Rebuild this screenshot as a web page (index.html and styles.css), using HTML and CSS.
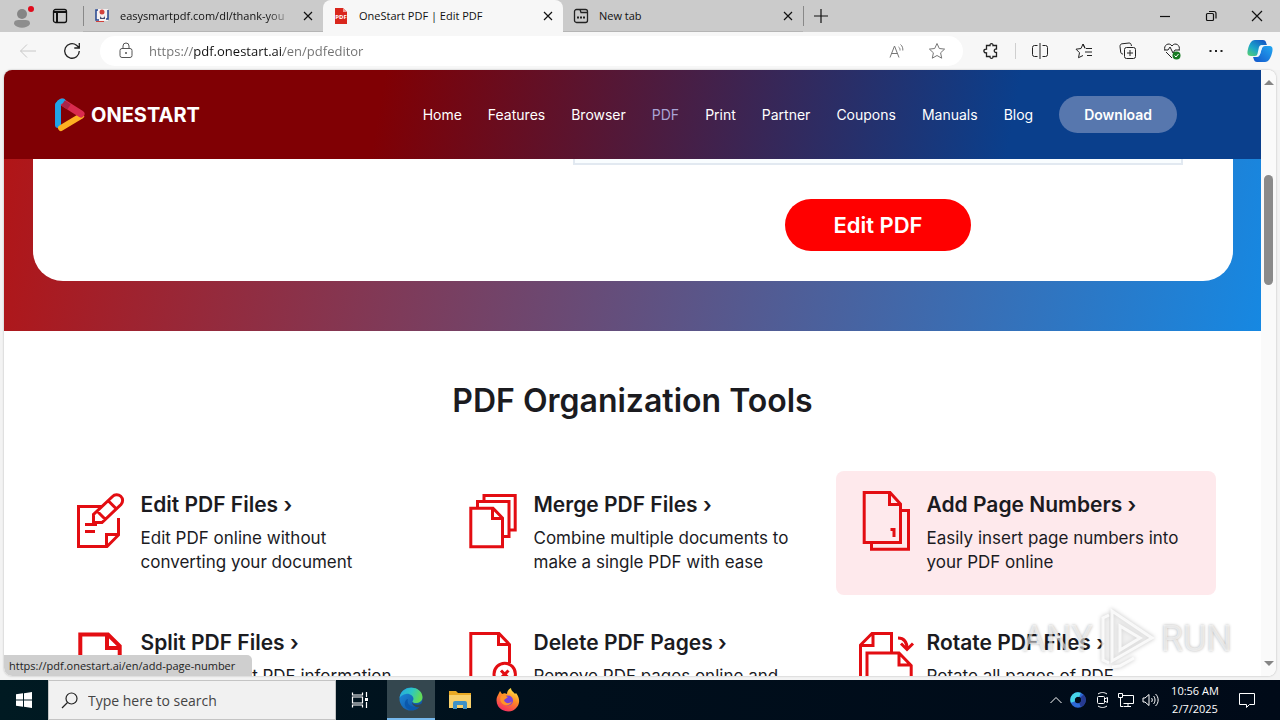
FILE: index.html
```
<!DOCTYPE html>
<html lang="en">
<head>
    <meta charset="UTF-8">
    <meta name="viewport" content="width=device-width, initial-scale=1.0">
    <title>OneStart PDF | Edit PDF</title>
    <link rel="stylesheet" href="styles.css">
</head>
<body>

    <!-- Browser tabs -->
    <div class="tabbar">
        <button class="profile" aria-label="Profile">
            <svg width="28" height="28" viewBox="0 0 28 28"><circle cx="14" cy="12" r="5" fill="#858585"/><path d="M6 22c0-4 2-4 8-4s8 0 8 4c-3 5-13 5-16 0z" fill="#8e8e8e"/><circle cx="23" cy="7" r="3" fill="#e00b1c"/></svg>
        </button>
        <button class="tab-actions" aria-label="Tab actions">
            <svg width="16" height="16" viewBox="0 0 16 16" fill="none" stroke="#111" stroke-width="1.300"><rect x="1.500" y="1.500" width="13" height="13" rx="2"/><path d="M1.500 4h13M5 4v10" stroke-width="2"/></svg>
        </button>
        <div class="tab tab-first">
            <svg width="16" height="16" viewBox="0 0 16 16"><rect x="2" y="1" width="12" height="12" fill="#f5f0f0"/><path d="M4 2H2v10h3M14 2v9h-2" fill="none" stroke="#24448f" stroke-width="1.500"/><circle cx="8" cy="4" r="2.500" fill="#d2413b"/><path d="M6 7c0 4 5 4 5 0v4H6z" fill="#444a70"/><path d="M2 13.500h8" stroke="#d2413b"/></svg>
            <span class="tab-title fade">easysmartpdf.com/dl/thank-you</span>
            <button class="close" aria-label="Close tab"><svg width="10" height="10" viewBox="0 0 10 10"><path d="M1 1l8 8M9 1L1 9"/></svg></button>
        </div>
        <div class="tab active">
            <svg width="16" height="16" viewBox="0 0 16 16"><path d="M2 0h8l4 4v12H2z" fill="#d9261c"/><path d="M10 0l4 4h-4z" fill="#f39a94"/><text x="8" y="11" class="pdf-mark">PDF</text></svg>
            <span class="tab-title">OneStart PDF | Edit PDF</span>
            <button class="close" aria-label="Close tab"><svg width="10" height="10" viewBox="0 0 10 10"><path d="M1 1l8 8M9 1L1 9"/></svg></button>
        </div>
        <div class="tab">
            <svg width="16" height="16" viewBox="0 0 16 16" fill="none" stroke="#222" stroke-width="1.300"><rect x="1.500" y="1.500" width="13" height="13" rx="2"/><path d="M7 1.500l1 3h6.500"/><path d="M4 9.500h2M7 9.500h2M10 9.500h2" stroke-width="1.800"/></svg>
            <span class="tab-title">New tab</span>
            <button class="close" aria-label="Close tab"><svg width="10" height="10" viewBox="0 0 10 10"><path d="M1 1l8 8M9 1L1 9"/></svg></button>
        </div>
        <button class="new-tab" aria-label="New tab"><svg width="14" height="14" viewBox="0 0 14 14"><path d="M7 0v14M0 7h14"/></svg></button>
        <div class="window-buttons">
            <button aria-label="Minimize"><svg width="12" height="12" viewBox="0 0 12 12"><path d="M1 6.500h10"/></svg></button>
            <button aria-label="Restore"><svg width="12" height="12" viewBox="0 0 12 12"><rect x="1.500" y="3.500" width="7" height="7" rx="1"/><path d="M4 1.500h5a2 2 0 0 1 2 2v5"/></svg></button>
            <button aria-label="Close"><svg width="12" height="12" viewBox="0 0 12 12"><path d="M1 1l10 10M11 1L1 11"/></svg></button>
        </div>
    </div>

    <!-- Address bar and browser buttons -->
    <div class="toolbar">
        <button class="nav-button" aria-label="Back" disabled><svg width="18" height="18" viewBox="0 0 18 18"><path d="M17 9H1.500M8 2.500L1.500 9 8 15.500" stroke="#c8c8c8"/></svg></button>
        <button class="nav-button" aria-label="Reload"><svg width="18" height="18" viewBox="0 0 18 18"><path d="M16.300 9A7.300 7.300 0 1 1 13.500 3.200L16 5.500M16.300 1v5h-5" stroke-width="1.300"/></svg></button>
        <div class="address">
            <svg width="18" height="18" viewBox="0 0 18 18"><rect x="3" y="6.500" width="12" height="9" rx="2" stroke="#555"/><path d="M6 6.500V4a3 3 0 0 1 6 0v2.500" stroke="#555"/><circle cx="9" cy="11" r="1" fill="#555" stroke="none"/></svg>
            <input class="url" type="text" aria-label="Address" value="https://pdf.onestart.ai/en/pdfeditor">
            <button aria-label="Read aloud"><svg width="18" height="18" viewBox="0 0 18 18"><path d="M2 15.500L6.500 4l4.500 11.500M3.500 11.500h6M10.500 5c1.500 1 1.500 2 1.500 3.500M12.500 2.500c2 1.500 2.500 4 2.300 6" stroke="#777"/></svg></button>
            <button aria-label="Add to favorites"><svg width="18" height="18" viewBox="0 0 18 18"><path d="M9 1.500l2.300 5 5.300.600-4 3.700 1.100 5.400L9 13.500l-4.700 2.700 1.100-5.400-4-3.700 5.300-.600z" stroke="#777"/></svg></button>
        </div>
        <div class="tools">
            <button aria-label="Extensions"><svg width="18" height="18" viewBox="0 0 18 18"><path d="M5 3.500h3c-.500-2.500 3.500-2.500 3 0h3.500v3.500c-3-.500-3 4 0 3.500v4H11c.500 2.500-3.500 2.500-3 0H4.500v-3.700c-3.500.500-3.500-4.100 0-3.600V3.500z" stroke-width="1.300"/></svg></button>
            <span class="separator"></span>
            <button aria-label="Split screen"><svg width="18" height="18" viewBox="0 0 18 18"><path d="M6.500 3.500h-3a2 2 0 0 0-2 2v7a2 2 0 0 0 2 2h3M11.500 3.500h3a2 2 0 0 1 2 2v7a2 2 0 0 1-2 2h-3M9 1v16"/></svg></button>
            <button aria-label="Favorites"><svg width="18" height="18" viewBox="0 0 18 18"><path d="M10 6L8 2 6 6.500l-5 .700 3.500 3.500-1 5L8 13.500M11 6.500h6M10 10h7M12 13.500h5M8 2l2 4.500"/></svg></button>
            <button aria-label="Collections"><svg width="18" height="18" viewBox="0 0 18 18"><path d="M4 12c-1.500 0-2-.500-2.300-2L1 4.500C1 3 1.500 2 3 1.800l7-.800c1.500 0 2 .500 2.500 3"/><rect x="5.500" y="5.500" width="11" height="11" rx="2"/><path d="M11 8v6M8 11h6"/></svg></button>
            <button aria-label="Browser essentials"><svg width="18" height="18" viewBox="0 0 18 18"><path d="M2 8C0 3.500 6-.500 9 4c3-4.500 9-.500 7 4M1 8h4l2-3 3 6 2-3h5M3 10l6 6"/><circle cx="13.500" cy="13.500" r="4" fill="#177b22" stroke="none"/><path d="M11.500 13.500l1.500 1.500 2.500-3" stroke="#fff"/></svg></button>
            <button aria-label="Settings and more"><svg width="18" height="18" viewBox="0 0 18 18"><path d="M2.500 9h2M8 9h2M13.500 9h2" stroke-width="2"/></svg></button>
            <button aria-label="Copilot">
                <svg class="copilot" width="26" height="26" viewBox="0 0 26 26">
                    <defs>
                        <linearGradient id="copA" x1="0" y1="1" x2=".800" y2="0"><stop offset="0" stop-color="#5bd36b"/><stop offset=".450" stop-color="#1ca6c9"/><stop offset="1" stop-color="#1458c5"/></linearGradient>
                        <linearGradient id="copB" x1="0" y1="1" x2="1" y2="0"><stop offset="0" stop-color="#1255cb"/><stop offset="1" stop-color="#24a9f2"/></linearGradient>
                    </defs>
                    <path d="M8 2h8c3 0 3 3 4 5h-4c-2 0-3 2-4 6s-2 5-5 5H4c-4 0-4-3-3-7s3-9 7-9z" fill="url(#copA)"/>
                    <path d="M18 24h-8c-3 0-3-3-4-5h4c2 0 3-2 4-6s2-5 5-5h3c4 0 4 3 3 7s-3 9-7 9z" fill="url(#copB)"/>
                    <path d="M12 9c1-2 2-2 4-2l-2 6c-1 3-1 5-4 5z" fill="#eaf7ff"/>
                </svg>
            </button>
        </div>
    </div>

    <div class="viewport">
        <div class="page">
            <header class="site-header">
                <a class="logo" href="#">
                    <svg width="31" height="34" viewBox="0 0 31 34" fill="none" stroke-width="6" stroke-linecap="round">
                        <path d="M4 27V7" stroke="#1e9bea"/>
                        <path d="M7 30L27 18" stroke="#fdb022"/>
                        <path d="M8 4l19 12" stroke="#d92b4f" stroke-width="7"/>
                        <path d="M4 25V8c0-3 2-5 5-5" stroke="#21a5e6" stroke-width="5"/>
                        <path d="M9 5l6 4" stroke="#a92548" stroke-linecap="butt"/>
                    </svg>
                    <span>ONESTART</span>
                </a>
                <nav class="menu">
                    <a href="#">Home</a>
                    <a href="#">Features</a>
                    <a href="#">Browser</a>
                    <a href="#" class="current">PDF</a>
                    <a href="#">Print</a>
                    <a href="#">Partner</a>
                    <a href="#">Coupons</a>
                    <a href="#">Manuals</a>
                    <a href="#">Blog</a>
                    <a href="#" class="download">Download</a>
                </nav>
            </header>

            <section class="hero">
                <div class="hero-card">
                    <div class="upload">
                        <div class="drop-area"></div>
                        <button class="edit-button">Edit PDF</button>
                    </div>
                </div>
            </section>

            <main class="tools-section">
                <h1>PDF Organization Tools</h1>
                <div class="tool-grid">
                    <a class="tool" href="#">
                        <svg class="tool-icon" viewBox="0 0 50 60">
                            <path d="M27 15.500H3.500V55.500H32L43.500 44V27M31.500 55.500V43.500H43.500M10 33.500h12M10 40.500h10"/>
                            <path d="M18.500 31.500v-8L37.500 5.500a5.800 5.800 0 0 1 8.500 8L27 31.500zM22 20l8.500 8.500M33 9.500l9 9"/>
                        </svg>
                        <div>
                            <h2>Edit PDF Files ›</h2>
                            <p>Edit PDF online without converting your document</p>
                        </div>
                    </a>
                    <a class="tool" href="#">
                        <svg class="tool-icon" viewBox="0 0 50 60">
                            <path d="M2.800 17.200H25L34.500 27V55.800H2.800zM24.500 17V27.500H34.500M9.500 17V10.500H41V45.500H35M16 10V4.500H47.200V39H41"/>
                        </svg>
                        <div>
                            <h2>Merge PDF Files ›</h2>
                            <p>Combine multiple documents to make a single PDF with ease</p>
                        </div>
                    </a>
                    <a class="tool hovered" href="#">
                        <svg class="tool-icon" viewBox="0 0 50 60">
                            <path d="M3.200 1.500H29L39.500 13V51.500H3.200zM28.500 1.500V13.500H39.500M10.500 52V58.200H47.500V19.500H40M29.500 38.500h3.500v7.500"/>
                        </svg>
                        <div>
                            <h2>Add Page Numbers ›</h2>
                            <p>Easily insert page numbers into your PDF online</p>
                        </div>
                    </a>
                    <a class="tool" href="#">
                        <svg class="tool-icon heavy" viewBox="0 0 50 60">
                            <path d="M5.300 60V5.500H33L44.700 17V60M32 6V19H45"/>
                        </svg>
                        <div>
                            <h2>Split PDF Files ›</h2>
                            <p>Split or extract PDF information into separate files</p>
                        </div>
                    </a>
                    <a class="tool" href="#">
                        <svg class="tool-icon" viewBox="0 0 50 60">
                            <path d="M2.800 60V4.500H31L41.500 15.500V34M30.500 4.500V15.500H41.500M33 41.500l7.500 7.500M40.500 41.500L33 49"/>
                            <circle cx="36.700" cy="45" r="10.700"/>
                        </svg>
                        <div>
                            <h2>Delete PDF Pages ›</h2>
                            <p>Remove PDF pages online and download instantly</p>
                        </div>
                    </a>
                    <a class="tool" href="#">
                        <svg class="tool-icon" viewBox="0 0 50 60">
                            <path d="M-.500 60V16L11 4.500H30.500V23M12 4.500V16.500H-.500M6 60V24H38L50.200 36.500V60M38 24V36H50.200M37 9c6 0 9 4 9 11M40 14.500l6 6 6-6"/>
                        </svg>
                        <div>
                            <h2>Rotate PDF Files ›</h2>
                            <p>Rotate all pages of PDF documents online</p>
                        </div>
                    </a>
                </div>
            </main>
        </div>
        <div class="scrollbar">
            <span class="arrow-up"></span>
            <span class="thumb"></span>
            <span class="arrow-down"></span>
        </div>
        <div class="link-status">https://pdf.onestart.ai/en/add-page-number</div>
    </div>

    <div class="watermark">
        <span>ANY</span>
        <svg width="56" height="62" viewBox="0 0 56 62"><path d="M10 7L4 10v42l6 3M13 3v50l40-23zM21 18v24l20-12z M13 59l8-1 14-8"/></svg>
        <span>RUN</span>
    </div>

    <!-- Windows taskbar -->
    <footer class="taskbar">
        <button class="start" aria-label="Start"><svg width="16" height="16" viewBox="0 0 16 16"><path d="M0 2.300L7 1.300V7.500H0zM8 1.200L16 0V7.500H8zM0 8.500H7V14.700L0 13.700zM8 8.500H16V16L8 14.800z" fill="#fff"/></svg></button>
        <label class="search">
            <svg width="17" height="17" viewBox="0 0 17 17" fill="none" stroke="#222" stroke-width="1.200"><circle cx="10.500" cy="6.500" r="5.500"/><path d="M6.500 10.500L1 16"/></svg>
            <input type="text" placeholder="Type here to search" aria-label="Search">
        </label>
        <button class="task" aria-label="Task view"><svg width="18" height="18" viewBox="0 0 18 18" fill="none" stroke="#fff" stroke-width="1.200"><path d="M1.500 1.500V4h10V1.500M1.500 16.500V14h10v2.500M1.500 6h10v6h-10zM15.500 1v5M15.500 11v6"/><path d="M14 7h3v3h-3z" fill="#fff" stroke="none"/></svg></button>
        <button class="task running" aria-label="Edge">
            <svg width="24" height="24" viewBox="0 0 24 24">
                <defs>
                    <linearGradient id="edgeTop" x1="0" y1="0" x2="1" y2=".300"><stop offset="0" stop-color="#27a7e2"/><stop offset=".550" stop-color="#2cc6c4"/><stop offset="1" stop-color="#62db57"/></linearGradient>
                    <linearGradient id="edgeLow" x1="0" y1="0" x2="1" y2="1"><stop offset="0" stop-color="#1b8fe0"/><stop offset="1" stop-color="#124a9a"/></linearGradient>
                </defs>
                <circle cx="12" cy="12" r="11.500" fill="url(#edgeLow)"/>
                <path d="M.600 11C2-3 23-2 23.500 10c0 4-3 6-7 6-2 0-4-1-2.500-2.500C16 10 11 6 7 7 4 7.500 1.500 9 .600 11z" fill="url(#edgeTop)"/>
                <path d="M9 12c-2 6 5 10 12 7-6 8-17 3-15-4 .500-2 2-3 3-3z" fill="#0b58ac"/>
                <path d="M13 15c1 3 7 4 11 1l-2 4c-4 1-9-1-9-5z" fill="#34474f"/>
            </svg>
        </button>
        <button class="task" aria-label="File Explorer"><svg width="22" height="20" viewBox="0 0 22 20"><path d="M0 1h7l2 2h13v15H0z" fill="#e9a923"/><path d="M0 5h22v13H0z" fill="#f8d06b"/><path d="M4 19v-6q0-2 2-2h10q2 0 2 2v6h-4v-4H8v4z" fill="#3d91c8"/></svg></button>
        <button class="task" aria-label="Firefox">
            <svg width="24" height="24" viewBox="0 0 24 24">
                <defs><linearGradient id="fox" x1=".800" y1="0" x2=".300" y2="1"><stop offset="0" stop-color="#fff04a"/><stop offset=".450" stop-color="#ff8b24"/><stop offset="1" stop-color="#f52a63"/></linearGradient></defs>
                <path d="M2 7l2-4 2 3c2-1 3-1 5 0 0-3 2-5 4-6 0 3 3 4 4 6l1-1c4 5 4 10 1 14-5 7-15 5-19-1C0 14 0 10 2 7z" fill="url(#fox)"/>
                <circle cx="12" cy="12.500" r="5" fill="#7a42d8"/><path d="M5 8c3-1 5 0 7 1l-4 3c1 4 6 4 8 1-1 5-8 6-11 1-1-2-1-4 0-6z" fill="#ff9428"/>
            </svg>
        </button>
        <div class="tray">
            <svg width="12" height="8" viewBox="0 0 12 8"><path d="M.500 7L6 1.500 11.500 7"/></svg>
            <svg width="16" height="16" viewBox="0 0 16 16"><circle cx="8" cy="8" r="5.500" stroke="#2d69d5" stroke-width="4.500"/><path d="M3 10a5.500 5.500 0 0 1 7-7.200" stroke="#46d4e8" stroke-width="4.500"/><path d="M12 4a5.500 5.500 0 0 1-2 9" stroke="#263a91" stroke-width="4.500"/></svg>
            <svg width="16" height="18" viewBox="0 0 16 18"><rect x="3.500" y="5.500" width="7" height="7" rx="1"/><path d="M10.500 8l3-1.500v5l-3-1.500M4 3c3-2 6-2 9 0M4 15c3 2 6 2 9 0"/></svg>
            <svg width="16" height="16" viewBox="0 0 16 16"><path d="M4.500 3.500h11v8h-10M10 11.500v3M6 14.500h7M.500 1.500h4v4h-4zM2.500 5.500v9h3"/></svg>
            <svg width="17" height="16" viewBox="0 0 17 16"><path d="M1 6v4h2l4 3.500v-11L3 6zM9.500 6c1 1 1 3 0 4M11.500 4c2 2 2 6 0 8M13.500 2c3.500 3 3.500 9 0 12"/></svg>
            <div class="clock"><span>10:56 AM</span><span>2/7/2025</span></div>
            <svg width="18" height="18" viewBox="0 0 18 18"><path d="M1.500 2.500h15v11h-5L8.500 16.500v-3h-7z"/></svg>
        </div>
    </footer>

</body>
</html>
```
FILE: styles.css
```
* {
    box-sizing: border-box;
}

body {
    margin: 0;
    height: 100vh;
    display: flex;
    flex-direction: column;
    overflow: hidden;
    background: #f3f3f3;
    color: #1b1b1f;
    font-family: "Open Sans", "Noto Sans", sans-serif;
}

button {
    padding: 0;
    border: none;
    background: none;
    font: inherit;
    color: inherit;
    display: flex;
    align-items: center;
    justify-content: center;
}

svg {
    flex: none;
}

a {
    color: inherit;
    text-decoration: none;
}

/* Tabs */
.tabbar {
    flex: none;
    height: 32px;
    display: flex;
    align-items: center;
    background: #cbcbcb;
    font-size: 11px;
    color: #111;
}

.profile {
    width: 44px;
}

.tab-actions {
    width: 32px;
    margin-right: 7px;
}

.tab {
    width: 240px;
    height: 32px;
    padding: 0 10px;
    display: flex;
    align-items: center;
    gap: 10px;
    border-bottom: 1px solid #b5b5b5;
}

.tab-first::before {
    content: "";
    width: 1px;
    height: 20px;
    margin: 0 0 0 -10px;
    background: #888;
}

.tab.active {
    background: #f7f7f7;
    border-color: #f7f7f7;
    border-radius: 8px 8px 0 0;
}

.tab-title {
    flex: 1;
    overflow: hidden;
    white-space: nowrap;
}

.fade {
    mask-image: linear-gradient(to right, #000 85%, transparent);
}

.pdf-mark {
    font-size: 6px;
    font-weight: 700;
    fill: #fff;
    text-anchor: middle;
}

.close svg,
.new-tab svg,
.window-buttons svg {
    fill: none;
    stroke: #111;
    stroke-width: 1.2;
}

.new-tab {
    width: 34px;
    height: 20px;
    border-left: 1px solid #888;
}

.window-buttons {
    margin-left: auto;
    display: flex;
}

.window-buttons button {
    width: 46px;
    height: 32px;
}

/* Toolbar */
.toolbar {
    flex: none;
    height: 38px;
    padding: 0 11px 0 6px;
    display: flex;
    align-items: center;
    background: #f7f7f7;
}

.toolbar svg {
    fill: none;
    stroke: #222;
}

.toolbar .copilot {
    stroke: none;
}

.nav-button {
    width: 44px;
}

.address {
    flex: 1;
    height: 30px;
    margin-left: 6px;
    padding: 0 17px;
    display: flex;
    align-items: center;
    background: #fff;
    border-radius: 15px;
}

.address button {
    width: 18px;
    margin-left: 22px;
}

.url {
    flex: 1;
    margin-left: 14px;
    padding: 0;
    border: none;
    outline: none;
    font-family: "Open Sans", "Noto Sans", sans-serif;
    font-size: 13px;
    color: transparent;
    background: linear-gradient(to right, #707070 45px, #111 45px, #111 134px, #707070 134px);
    -webkit-background-clip: text;
    background-clip: text;
}

.tools {
    display: flex;
    align-items: center;
    gap: 26px;
    padding-left: 19px;
}

.tools button {
    width: 18px;
}

.separator {
    width: 1px;
    height: 16px;
    margin: 0 -11px;
    background: #cfcfcf;
}

/* Web page */
.viewport {
    flex: 1;
    min-height: 0;
    margin: 0 4px 4px;
    display: flex;
    position: relative;
    overflow: hidden;
    background: #fff;
    border-radius: 8px;
    box-shadow: 0 0 2px #aaa;
}

.page {
    flex: 1;
    overflow: hidden;
    font-family: Inter, "Open Sans", sans-serif;
}

.site-header {
    height: 89px;
    padding: 0 84px 0 50px;
    display: flex;
    align-items: center;
    justify-content: space-between;
    background: linear-gradient(100deg, #800004 30%, #0a3f8c 80%);
    color: #fff;
}

.logo {
    display: flex;
    align-items: center;
    gap: 6px;
    font-size: 20px;
    font-weight: 700;
}

.menu {
    display: flex;
    align-items: center;
    gap: 26px;
    font-size: 14px;
}

.current {
    color: #a9a3d6;
}

.download {
    padding: 10px 25px;
    line-height: 17px;
    font-weight: 600;
    background: #5777ae;
    border-radius: 20px;
}

.hero {
    padding: 0 28px 50px 29px;
    background: linear-gradient(100deg, #b11517, #1688e2);
}

.hero-card {
    padding: 0 50px 30px;
    display: flex;
    justify-content: flex-end;
    background: #fff;
    border-radius: 0 0 30px 30px;
}

.upload {
    flex: 0 1 610px;
    display: flex;
    flex-direction: column;
    align-items: center;
    gap: 34px;
}

.drop-area {
    align-self: stretch;
    height: 6px;
    background: #f9fdff;
    border: 2px solid #e2e9f1;
    border-top: none;
}

.edit-button {
    padding: 0 48px;
    line-height: 52px;
    font-size: 22px;
    font-weight: 600;
    color: #fff;
    background: #f00;
    border-radius: 26px;
}

.tools-section {
    max-width: 1166px;
    margin: 0 auto;
    padding-top: 50px;
}

h1 {
    margin: 0 0 50px;
    text-align: center;
    font-size: 32px;
    line-height: 40px;
    font-weight: 600;
}

.tool-grid {
    display: grid;
    grid-template-columns: repeat(3, 1fr);
    gap: 14px 13px;
}

.tool {
    padding: 20px 25px 21px;
    display: flex;
    gap: 16px;
    border-radius: 8px;
}

.hovered {
    background: #fee9ec;
}

.tool-icon {
    width: 50px;
    height: 60px;
    fill: none;
    stroke: #e30d12;
    stroke-width: 3;
    overflow: visible;
}

.heavy {
    stroke-width: 4;
}

.tool h2 {
    margin: 0 0 7px;
    font-size: 21px;
    line-height: 28px;
    font-weight: 600;
}

.tool p {
    margin: 0;
    font-size: 17px;
    line-height: 24px;
}

.scrollbar {
    flex: none;
    width: 15px;
    display: flex;
    flex-direction: column;
    align-items: center;
    padding: 10px 0;
    background: #fafafa;
}

.arrow-up,
.arrow-down {
    border: 5px solid transparent;
    border-top: none;
    border-bottom: 5px solid #858585;
}

.arrow-down {
    margin-top: auto;
    transform: rotate(180deg);
}

.thumb {
    width: 9px;
    height: 110px;
    margin-top: 90px;
    background: #8b8b8b;
    border-radius: 5px;
}

.link-status {
    position: absolute;
    left: 0;
    bottom: 0;
    padding: 0 17px 0 5px;
    font-size: 11px;
    line-height: 21px;
    color: #222;
    background: #cfcfcf;
    border-radius: 0 5px 0 8px;
}

.watermark {
    position: absolute;
    right: 48px;
    bottom: 50px;
    display: flex;
    align-items: center;
    gap: 6px;
    font-family: "Liberation Sans Narrow", Roboto, sans-serif;
    font-size: 36px;
    line-height: 60px;
    color: rgba(255, 255, 255, 0.6);
    text-shadow: 0 0 3px rgba(0, 0, 0, 0.3);
    pointer-events: none;
}

.watermark svg {
    fill: rgba(255, 255, 255, 0.3);
    stroke: rgba(255, 255, 255, 0.8);
    stroke-width: 3;
    filter: drop-shadow(0 0 2px rgba(0, 0, 0, 0.3));
}

/* Taskbar */
.taskbar {
    flex: none;
    height: 40px;
    display: flex;
    background: linear-gradient(to right, #001a22, #000f1c 45%, #000a18);
    color: #fff;
}

.start,
.task {
    width: 48px;
}

.search {
    width: 288px;
    padding: 0 12px;
    display: flex;
    align-items: center;
    gap: 10px;
    background: #f1f1f1;
    border: 1px solid #c4c4c4;
}

.search input {
    flex: 1;
    min-width: 0;
    padding: 0;
    border: none;
    background: none;
    font-family: "Open Sans", "Noto Sans", sans-serif;
    font-size: 14px;
}

.search input::placeholder {
    color: #444;
}

.task.running {
    margin: 0 1px 0 3px;
    background: #34474f;
    border-bottom: 2px solid #76b9ed;
}

.tray {
    margin-left: auto;
    padding-right: 24px;
    display: flex;
    align-items: center;
    gap: 8px;
}

.tray svg {
    fill: none;
    stroke: #fff;
}

.clock {
    width: 56px;
    margin-right: 7px;
    display: flex;
    flex-direction: column;
    align-items: center;
    font-size: 11px;
    line-height: 18px;
    white-space: nowrap;
}
```
